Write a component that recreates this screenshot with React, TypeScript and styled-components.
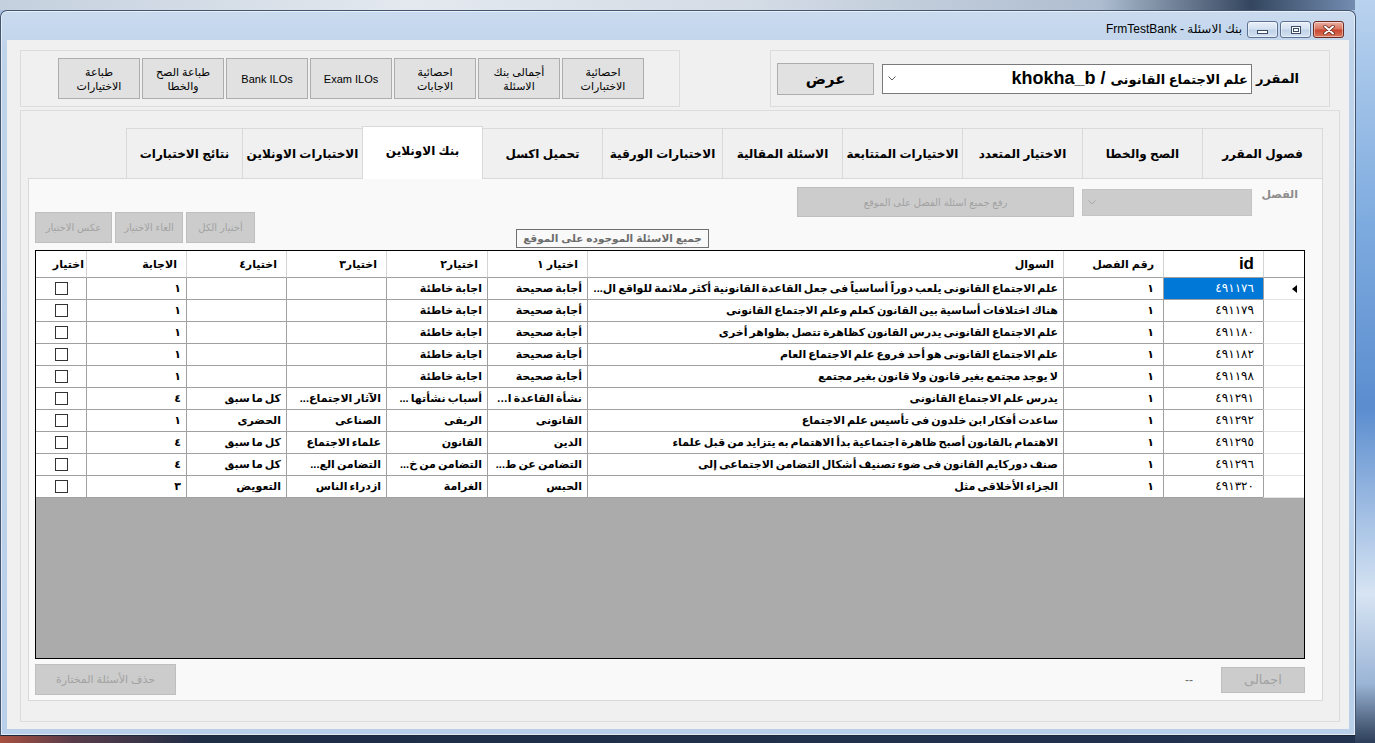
import React from 'react'
import styled, { createGlobalStyle } from 'styled-components'

const FONT = `"Liberation Sans", "DejaVu Sans", sans-serif`

const GlobalStyle = createGlobalStyle`
  html, body {
    margin: 0;
    padding: 0;
    overflow: hidden;
  }
  body {
    font-family: ${FONT};
  }
  * {
    box-sizing: border-box;
  }
`

const TABS = [
  'فصول المقرر',
  'الصح والخطا',
  'الاختيار المتعدد',
  'الاختيارات المتتابعة',
  'الاسئلة المقالية',
  'الاختبارات الورقية',
  'تحميل اكسل',
  'بنك الاونلاين',
  'الاختبارات الاونلاين',
  'نتائج الاختبارات',
]

const TOOLS = [
  'احصائية\nالاختبارات',
  'أجمالى بنك\nالاسئلة',
  'احصائية\nالاجابات',
  'Exam ILOs',
  'Bank ILOs',
  'طباعة الصح\nوالخطا',
  'طباعة\nالاختيارات',
]

const HEADERS = ['id', 'رقم الفصل', 'السوال', 'اختيار ١', 'اختيار٢', 'اختيار٣', 'اختيار٤', 'الاجابة', 'اختيار']

const ROWS: string[][] = [
  ['٤٩١١٧٦', '١', 'علم الاجتماع القانونى  يلعب دوراً أساسياً فى جعل القاعدة القانونية أكثر ملائمة للواقع ال...', 'أجابة صحيحة', 'اجابة خاطئة', '', '', '١'],
  ['٤٩١١٧٩', '١', 'هناك اختلافات أساسية بين القانون كعلم وعلم الاجتماع القانونى', 'أجابة صحيحة', 'اجابة خاطئة', '', '', '١'],
  ['٤٩١١٨٠', '١', 'علم الاجتماع القانونى يدرس القانون كظاهرة تتصل بظواهر أخرى', 'أجابة صحيحة', 'اجابة خاطئة', '', '', '١'],
  ['٤٩١١٨٢', '١', 'علم الاجتماع القانونى هو أحد فروع علم الاجتماع العام', 'أجابة صحيحة', 'اجابة خاطئة', '', '', '١'],
  ['٤٩١١٩٨', '١', 'لا يوجد مجتمع بغير قانون ولا قانون بغير مجتمع', 'أجابة صحيحة', 'اجابة خاطئة', '', '', '١'],
  ['٤٩١٢٩١', '١', 'يدرس علم الاجتماع القانونى', 'نشأة القاعدة ال...', 'أسباب نشأتها ...', 'الآثار الاجتماع...', 'كل ما سبق', '٤'],
  ['٤٩١٢٩٢', '١', 'ساعدت أفكار ابن خلدون فى تأسيس علم الاجتماع', 'القانونى', 'الريفى', 'الصناعى', 'الحضرى', '١'],
  ['٤٩١٢٩٥', '١', 'الاهتمام بالقانون أصبح ظاهرة اجتماعية بدأ الاهتمام به يتزايد من قبل علماء', 'الدين', 'القانون', 'علماء الاجتماع', 'كل ما سبق', '٤'],
  ['٤٩١٢٩٦', '١', 'صنف دوركايم القانون فى ضوء تصنيف أشكال التضامن الاجتماعى إلى', 'التضامن عن ط...', 'التضامن من خ...', 'التضامن الع...', 'كل ما سبق', '٤'],
  ['٤٩١٣٢٠', '١', 'الجزاء الأخلاقى مثل', 'الحبس', 'الغرامة', 'ازدراء الناس', 'التعويض', '٣'],
]

export default function App() {
  return (
    <>
      <GlobalStyle />
      <Desktop>
        <Window>
          <TitleBar>
            <TitleText>بنك الاسئلة - FrmTestBank</TitleText>
            <CaptionButton>
              <MinGlyph />
            </CaptionButton>
            <CaptionButton>
              <MaxGlyph />
            </CaptionButton>
            <CaptionButton $close>
              <svg width="12" height="10" viewBox="0 0 12 10">
                <path d="M2 1.5 L10 8.5 M10 1.5 L2 8.5" stroke="#5a1f16" strokeWidth="3.4" strokeLinecap="round" />
                <path d="M2 1.5 L10 8.5 M10 1.5 L2 8.5" stroke="#fff" strokeWidth="2" strokeLinecap="round" />
              </svg>
            </CaptionButton>
          </TitleBar>

          <Client>
            <TopRow>
              <CourseBox>
                <FieldLabel>المقرر</FieldLabel>
                <CourseCombo>
                  <CourseText>
                    <ArabicPart>علم الاجتماع القانونى</ArabicPart> / khokha_b
                  </CourseText>
                  <Chevron />
                </CourseCombo>
                <ShowButton>عرض</ShowButton>
              </CourseBox>

              <ToolBox>
                {TOOLS.map((t) => (
                  <ToolButton key={t}>{t}</ToolButton>
                ))}
              </ToolBox>
            </TopRow>

            <MainBox>
              <TabStrip>
                {TABS.map((t, i) => (
                  <Tab key={t} $active={i === 7} $last={i === TABS.length - 1}>
                    {t}
                  </Tab>
                ))}
              </TabStrip>

              <TabPage>
                <ToolArea>
                  <FilterLabel>الفصل</FilterLabel>
                  <FilterCombo>
                    <Chevron $muted />
                  </FilterCombo>
                  <UploadButton disabled>رفع جميع اسئلة الفصل على الموقع</UploadButton>
                  <AllLabel>جميع الاسئلة الموجوده على الموقع</AllLabel>
                  <SelectGroup>
                    <SmallButton disabled $w={69}>أختيار الكل</SmallButton>
                    <SmallButton disabled $w={68}>الغاء الاختيار</SmallButton>
                    <SmallButton disabled $w={77}>عكس الاختيار</SmallButton>
                  </SelectGroup>
                </ToolArea>

                <GridBox>
                  <GridRow $head>
                    <RowHeadCell $head />
                    {HEADERS.map((h, i) => (
                      <HeadCell key={h} $id={i === 0} $tight={i === HEADERS.length - 1}>
                        {h}
                      </HeadCell>
                    ))}
                  </GridRow>
                  {ROWS.map((r, ri) => (
                    <GridRow key={r[0]}>
                      <RowHeadCell>{ri === 0 && <CurrentMark />}</RowHeadCell>
                      {r.map((v, ci) => (
                        <Cell key={ci} $sel={ri === 0 && ci === 0} $num={ci === 0} $pad={ci < 2 ? 9 : 5}>
                          {v}
                        </Cell>
                      ))}
                      <CheckCell>
                        <CheckBox />
                      </CheckCell>
                    </GridRow>
                  ))}
                </GridBox>

                <BottomBar>
                  <TotalButton disabled>اجمالى</TotalButton>
                  <CountLabel>--</CountLabel>
                  <DeleteButton disabled>حذف الأسئلة المختارة</DeleteButton>
                </BottomBar>
              </TabPage>
            </MainBox>
          </Client>
        </Window>
      </Desktop>
    </>
  )
}

function Chevron({ $muted }: { $muted?: boolean }) {
  return (
    <ChevronWrap>
      <svg width="8" height="5" viewBox="0 0 8 5">
        <path d="M0.5 0.5 L4 4 L7.5 0.5" fill="none" stroke={$muted ? '#a8a8a8' : '#606060'} strokeWidth="1" />
      </svg>
    </ChevronWrap>
  )
}

const Desktop = styled.div`
  width: 1375px;
  height: 743px;
  padding-top: 10px;
  background:
    linear-gradient(180deg, #b9d2ee 0%, #7eabdf 30%, #5b8dcf 55%, #d7e4f3 80%, #9bb5d6 92%, #2c3d57 100%) right / 20px 100% no-repeat,
    linear-gradient(90deg, #a8503f 0, #5a3c4a 70px, #1f2d45 200px, #223350 100%) bottom / 100% 8px no-repeat,
    linear-gradient(90deg, #c4d0de 0%, #e4e9ef 30%, #d3dbe5 55%, #aebdd0 80%, #34465f 91%, #7f9ac0 100%) top / 100% 10px no-repeat,
    #aac2e2;
`

const Window = styled.div`
  width: 1356px;
  height: 726px;
  border: 1px solid #44566f;
  border-bottom-color: #1d2636;
  border-radius: 7px 7px 0 0;
  background: linear-gradient(180deg, #cadbef 0%, #bfd3ea 40px, #bad0ea 100%);
  padding: 0 6px 6px;
  display: flex;
  flex-direction: column;
  box-shadow: inset 0 0 0 1px rgba(255, 255, 255, 0.55);
`

const TitleBar = styled.div`
  height: 29px;
  display: flex;
  align-items: flex-start;
  justify-content: flex-end;
  gap: 2px;
  padding: 10px 5px 0 0;
  direction: ltr;
`

const TitleText = styled.div`
  font: 12px ${FONT};
  line-height: 17px;
  color: #000;
  direction: rtl;
  margin-right: 3px;
`

const CaptionButton = styled.div<{ $close?: boolean }>`
  width: 31px;
  height: 17px;
  border: 1px solid ${(p) => (p.$close ? '#6e2b22' : '#5d7192')};
  border-radius: 3px;
  display: flex;
  align-items: center;
  justify-content: center;
  background: ${(p) =>
    p.$close
      ? 'linear-gradient(180deg, #eab1a5 0%, #d9735d 48%, #c8452d 52%, #d8755c 100%)'
      : 'linear-gradient(180deg, #e9f0f8 0%, #d3e0ef 48%, #bfd1e7 52%, #d4e2f1 100%)'};
  box-shadow: inset 0 0 0 1px rgba(255, 255, 255, 0.45);
`

const MinGlyph = styled.div`
  width: 11px;
  height: 4px;
  margin-top: 5px;
  background: #fff;
  border: 1px solid #3a4b66;
`

const MaxGlyph = styled.div`
  width: 10px;
  height: 8px;
  border: 1px solid #3a4b66;
  background: #fff;
  box-shadow: inset 0 0 0 1px #fff, inset 0 0 0 2px #3a4b66;
`

const Client = styled.div`
  flex: 1;
  background: #f0f0f0;
  direction: rtl;
  display: flex;
  flex-direction: column;
  padding: 10px 9px 7px 13px;
  font-family: ${FONT};
`

const TopRow = styled.div`
  height: 57px;
  margin-bottom: 3px;
  padding-right: 10px;
  display: flex;
  justify-content: space-between;
`

const GroupBox = styled.div`
  border: 1px solid #dcdcdc;
  display: flex;
  align-items: center;
`

const CourseBox = styled(GroupBox)`
  width: 560px;
  padding-right: 30px;
`

const FieldLabel = styled.div`
  width: 35px;
  font: bold 13px ${FONT};
  color: #000;
  white-space: nowrap;
`

const CourseCombo = styled.div`
  width: 370px;
  height: 30px;
  margin-right: 12px;
  border: 1px solid #7a7a7a;
  background: #fff;
  display: flex;
  align-items: center;
  padding-right: 3px;
`

const CourseText = styled.div`
  font: bold 18px ${FONT};
  color: #000;
  white-space: nowrap;
`

const ArabicPart = styled.span`
  font-size: 13px;
`

const ChevronWrap = styled.div`
  margin-right: auto;
  margin-left: 5px;
  display: flex;
`

const WinButton = styled.button`
  font-family: ${FONT};
  background: #e1e1e1;
  border: 1px solid #adadad;
  color: #000;
  padding: 0;
  margin: 0;
  display: flex;
  align-items: center;
  justify-content: center;
  text-align: center;
  &:disabled {
    background: #cccccc;
    border-color: #bfbfbf;
    color: #a2a2a2;
  }
`

const ShowButton = styled(WinButton)`
  width: 97px;
  height: 32px;
  margin-right: 8px;
  font-size: 15px;
  font-weight: bold;
`

const ToolBox = styled(GroupBox)`
  width: 660px;
  padding: 0 35px 0 37px;
  gap: 2px;
`

const ToolButton = styled(WinButton)`
  width: 82px;
  height: 41px;
  font-size: 11px;
  line-height: 14px;
  white-space: pre-line;
`

const MainBox = styled.div`
  flex: 1;
  border: 1px solid #dcdcdc;
  padding: 15px 16px 20px 7px;
  display: flex;
  flex-direction: column;
`

const TabStrip = styled.div`
  height: 52px;
  display: flex;
  align-items: flex-end;
`

const Tab = styled.div<{ $active?: boolean; $last?: boolean }>`
  width: ${(p) => (p.$last ? 117 : 121)}px;
  height: ${(p) => (p.$active ? 53 : 50)}px;
  margin-left: -1px;
  margin-bottom: ${(p) => (p.$active ? -1 : 0)}px;
  border: 1px solid #d9d9d9;
  border-bottom: none;
  background: ${(p) => (p.$active ? '#ffffff' : '#f0f0f0')};
  position: relative;
  z-index: ${(p) => (p.$active ? 1 : 0)};
  display: flex;
  align-items: center;
  justify-content: center;
  padding-bottom: ${(p) => (p.$active ? 4 : 0)}px;
  font: bold 12px ${FONT};
  color: #000;
  white-space: nowrap;
`

const TabPage = styled.div`
  flex: 1;
  border: 1px solid #d9d9d9;
  background: #f9f9f9;
  display: flex;
  flex-direction: column;
`

const ToolArea = styled.div`
  height: 71px;
  display: flex;
  padding: 0 24px 0 6px;
`

const FilterLabel = styled.div`
  width: 33px;
  margin-top: 9px;
  height: 30px;
  line-height: 30px;
  font: bold 11px ${FONT};
  color: #8c8c8c;
  white-space: nowrap;
`

const FilterCombo = styled.div`
  width: 170px;
  height: 27px;
  margin: 10px 13px 0 0;
  background: #cccccc;
  border: 1px solid #c4c4c4;
  display: flex;
  align-items: center;
`

const UploadButton = styled(WinButton)`
  width: 277px;
  height: 30px;
  margin: 8px 8px 0 0;
  font-size: 10px;
`

const AllLabel = styled.div`
  align-self: flex-end;
  width: 193px;
  height: 19px;
  margin: 0 88px 2px 0;
  border: 1px solid #707070;
  font: bold 10.5px ${FONT};
  line-height: 17px;
  color: #6d6d6d;
  text-align: center;
  white-space: nowrap;
  overflow: hidden;
`

const SelectGroup = styled.div`
  align-self: flex-end;
  margin: 0 auto 7px 0;
  display: flex;
  gap: 3px;
`

const SmallButton = styled(WinButton)<{ $w: number }>`
  width: ${(p) => p.$w}px;
  height: 31px;
  font-size: 10px;
  white-space: nowrap;
`

const COLS = '41px 100px 100px 476px 100px 101px 100px 100px 100px 50px'

const GridBox = styled.div`
  flex: 1;
  margin: 0 17px 0 6px;
  border: 1px solid #000;
  background: #ababab;
  overflow: hidden;
`

const GridRow = styled.div<{ $head?: boolean }>`
  display: grid;
  grid-template-columns: ${COLS};
  height: ${(p) => (p.$head ? 27 : 22)}px;
`

const BaseCell = styled.div`
  border-left: 1px solid #a0a0a0;
  border-bottom: 1px solid #a0a0a0;
  background: #fff;
  white-space: nowrap;
  overflow: hidden;
  text-overflow: ellipsis;
  text-align: right;
  &:last-child {
    border-left: none;
  }
`

const HeadCell = styled(BaseCell)<{ $id?: boolean; $tight?: boolean }>`
  border-left-color: #d4d4d4;
  padding-right: ${(p) => (p.$tight ? 2 : 9)}px;
  font: bold ${(p) => (p.$id ? 17 : 11)}px ${FONT};
  line-height: 26px;
  color: #000;
  text-overflow: clip;
`

const RowHeadCell = styled(BaseCell)<{ $head?: boolean }>`
  border-bottom-color: ${(p) => (p.$head ? '#a0a0a0' : '#e4e4e4')};
  border-left-color: ${(p) => (p.$head ? '#d4d4d4' : '#a0a0a0')};
  display: flex;
  align-items: center;
  padding-right: 7px;
`

const CurrentMark = styled.div`
  width: 0;
  height: 0;
  border-top: 4px solid transparent;
  border-bottom: 4px solid transparent;
  border-right: 5px solid #000;
`

const Cell = styled(BaseCell)<{ $sel?: boolean; $pad?: number; $num?: boolean }>`
  background: ${(p) => (p.$sel ? '#0078d7' : '#fff')};
  color: ${(p) => (p.$sel ? '#fff' : '#000')};
  padding-right: ${(p) => p.$pad ?? 5}px;
  padding-left: 2px;
  font: ${(p) => (p.$num ? 'normal 12px' : 'bold 11px')} ${FONT};
  letter-spacing: ${(p) => (p.$num ? '0.5px' : '0')};
  word-spacing: -1px;
  line-height: 21px;
`

const CheckCell = styled(BaseCell)`
  display: flex;
  align-items: center;
  justify-content: center;
`

const CheckBox = styled.div`
  width: 13px;
  height: 13px;
  border: 1px solid #333;
  background: #fff;
`

const BottomBar = styled.div`
  height: 41px;
  display: flex;
  align-items: center;
  padding: 0 17px 0 6px;
`

const TotalButton = styled(WinButton)`
  width: 84px;
  height: 26px;
  font-size: 13px;
`

const CountLabel = styled.div`
  margin-right: 28px;
  font: 12px ${FONT};
  color: #6d6d6d;
`

const DeleteButton = styled(WinButton)`
  width: 141px;
  height: 31px;
  margin-right: auto;
  font-size: 11px;
`
